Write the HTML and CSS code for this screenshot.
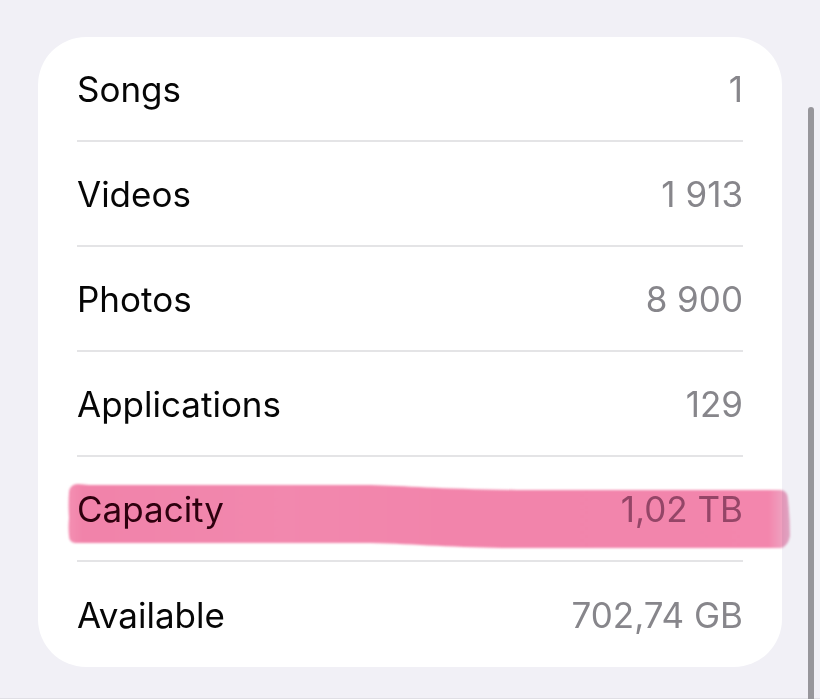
FILE: index.html
```html
<!DOCTYPE html>
<html lang="en">
<head>
    <meta charset="UTF-8">
    <meta name="viewport" content="width=device-width, initial-scale=1.0">
    <title>About</title>
    <link rel="stylesheet" href="styles.css">
</head>
<body>

    <!-- Storage Details -->
    <dl class="card">
        <div class="row">
            <dt>Songs</dt>
            <dd>1</dd>
        </div>
        <div class="row">
            <dt>Videos</dt>
            <dd>1 913</dd>
        </div>
        <div class="row">
            <dt>Photos</dt>
            <dd>8 900</dd>
        </div>
        <div class="row">
            <dt>Applications</dt>
            <dd>129</dd>
        </div>
        <div class="row marked">
            <dt>Capacity</dt>
            <dd>1,02 TB</dd>
            <!-- Marker Stroke -->
            <svg class="marker" viewBox="0 0 724 68" preserveAspectRatio="none" aria-hidden="true">
                <defs>
                    <linearGradient id="ink">
                        <stop offset="0" stop-color="#f48fb2"/>
                        <stop offset="0.02" stop-color="#f183aa"/>
                        <stop offset="0.3" stop-color="#f288ae"/>
                        <stop offset="0.55" stop-color="#f284ab"/>
                        <stop offset="0.97" stop-color="#f386ad"/>
                        <stop offset="1" stop-color="#ecafc9"/>
                    </linearGradient>
                </defs>
                <path fill="url(#ink)" d="M11 2 L22 3 L304 3 C340 4 370 7 450 8 L714 8 Q721 9 721 18 Q723 36 723 54 Q721 64 714 66 L450 66 C390 66 350 62 304 61 L8 61 Q2 60 2 54 Q1 46 2 36 Q1 22 2 10 Q3 2 11 2 Z"/>
            </svg>
        </div>
        <div class="row">
            <dt>Available</dt>
            <dd>702,74 GB</dd>
        </div>
    </dl>

    <!-- Scroll Indicator -->
    <div class="scrollbar"></div>

</body>
</html>
```

FILE: styles.css
```css
/* General Styling */
:root {
    --background-color: #f1f0f6;
    --text-color: #060606;
    --value-color: #87868b;
    --card-background: white;
    --separator-color: #e4e4e6;
}

* {
    box-sizing: border-box;
}

body {
    font-family: Inter, Roboto, "Liberation Sans", sans-serif;
    background-color: var(--background-color);
    color: var(--text-color);
    margin: 0;
    min-height: 100vh;
    padding: 37px 38px 30px;
    border-bottom: 1px solid #e0dfe5;
}

/* Card */
.card {
    margin: 0;
    padding: 0 39px;
    background: var(--card-background);
    border-radius: 48px;
}

.row {
    position: relative;
    display: flex;
    align-items: center;
    justify-content: space-between;
    min-height: 105px;
    font-size: 35px;
    line-height: 44px;
    border-bottom: 2px solid var(--separator-color);
}

.row:last-child {
    border-bottom: none;
}

.row dd {
    margin: 0;
    color: var(--value-color);
}

.marked dt {
    color: #300014;
}

.marked dd {
    color: #9c8498;
}

/* Marker Stroke */
.marker {
    position: absolute;
    top: 25px;
    left: -10px;
    width: calc(100% + 58px);
    height: 68px;
    overflow: visible;
    mix-blend-mode: multiply;
    filter: blur(1px);
}

/* Scroll Indicator */
.scrollbar {
    position: fixed;
    top: 107px;
    right: 6px;
    bottom: -10px;
    width: 6px;
    border-radius: 3px;
    background: #97969b;
}
```
